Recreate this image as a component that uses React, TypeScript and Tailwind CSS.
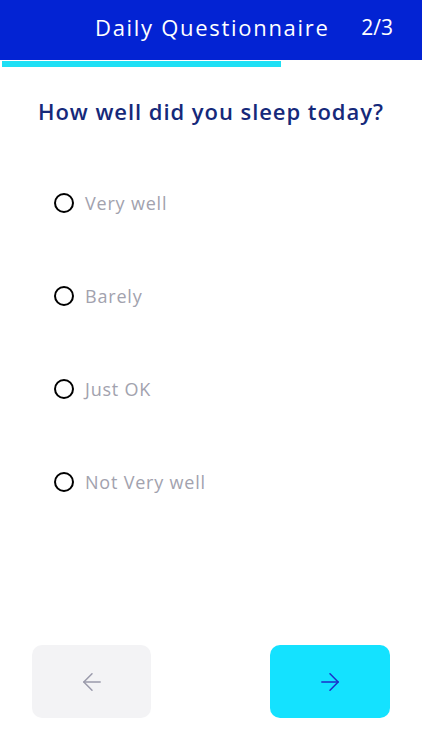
import { ArrowLeft, ArrowRight } from "lucide-react"

const options = ["Very well", "Barely", "Just OK", "Not Very well"]

export default function App() {
  return (
    <div className="flex h-[750px] w-[422px] flex-col bg-white font-['Open_Sans','Noto_Sans',sans-serif]">
      {/* Header */}
      <div className="flex h-[60px] items-center bg-[#0323d3] pb-[5px] pl-[95px] pr-[29px] text-white">
        <h1 className="flex-1 text-[22px] tracking-[1.7px]">Daily Questionnaire</h1>
        <span className="text-[21px]">2/3</span>
      </div>

      {/* Progress */}
      <div className="mt-[1px] h-[6px] w-full">
        <div className="ml-[2px] h-full w-[279px] bg-[#1ee0f5]" />
      </div>

      {/* Question */}
      <h2 className="mt-[28px] pl-[38px] text-[22px] font-semibold tracking-[0.95px] text-[#15297a]">
        How well did you sleep today?
      </h2>

      <div className="mt-[65px] flex flex-col gap-[73px] pl-[54px]">
        {options.map((o) => (
          <label key={o} className="flex h-[20px] items-center gap-[11px]">
            <span className="h-[20px] w-[20px] rounded-full border-2 border-black" />
            <span className="text-[18px] tracking-[0.8px] text-[#a2a2ae]">{o}</span>
          </label>
        ))}
      </div>

      <div className="flex-1" />

      {/* Nav */}
      <div className="mb-[32px] flex justify-between px-[32px]">
        <button className="flex h-[73px] w-[119px] items-center justify-center rounded-[10px] bg-[#f3f3f5]">
          <ArrowLeft className="h-[28px] w-[28px] text-[#9a9aab]" strokeWidth={1.3} />
        </button>
        <button className="flex h-[73px] w-[120px] items-center justify-center rounded-[10px] bg-[#14e2ff]">
          <ArrowRight className="h-[28px] w-[28px] text-[#1d2fc9]" strokeWidth={1.3} />
        </button>
      </div>
    </div>
  )
}
